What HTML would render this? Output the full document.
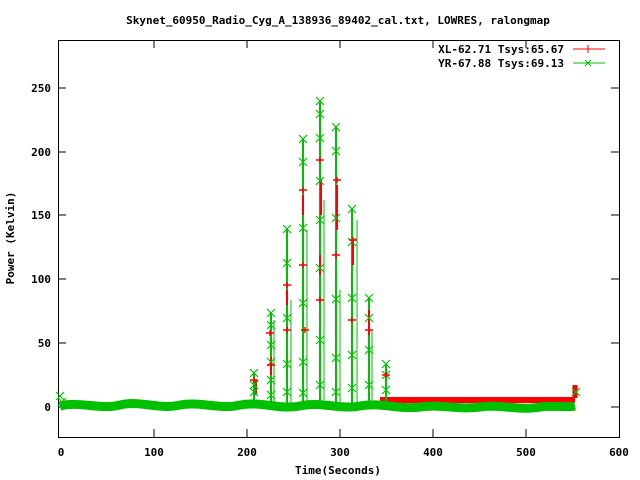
<!DOCTYPE html>
<html><head><meta charset="utf-8"><style>
html,body{margin:0;padding:0;background:#fff;width:640px;height:480px;overflow:hidden}
text{font-family:"DejaVu Sans Mono","Liberation Mono",monospace;font-weight:bold;font-size:11px;fill:#000}
</style></head><body>
<svg width="640" height="480" viewBox="0 0 640 480" xmlns="http://www.w3.org/2000/svg">
<defs>
<g id="gx"><path d="M-4,-4L4,4M-4,4L4,-4" stroke="#00c000" stroke-width="1.2"/></g>
<g id="rp"><path d="M-4,0H4M0,-3V3" stroke="#f00" stroke-width="1.5"/></g>
</defs>
<rect width="640" height="480" fill="#fff"/>
<rect x="58.5" y="40.5" width="561" height="397" fill="none" stroke="#000"/>
<g stroke="#000">
<path d="M58,407h8M58,343h8M58,279h8M58,215h8M58,152h8M58,88h8M619,407h-8M619,343h-8M619,279h-8M619,215h-8M619,152h-8M619,88h-8"/>
<path d="M154,437v-8M247,437v-8M340,437v-8M433,437v-8M526,437v-8M154,40v8M247,40v8M340,40v8M433,40v8M526,40v8"/>
</g>
<text x="338" y="24" text-anchor="middle">Skynet_60950_Radio_Cyg_A_138936_89402_cal.txt, LOWRES, ralongmap</text>
<g text-anchor="end">
<text x="51" y="411">0</text><text x="51" y="347">50</text><text x="51" y="283">100</text>
<text x="51" y="219">150</text><text x="51" y="156">200</text><text x="51" y="92">250</text>
</g>
<g text-anchor="middle">
<text x="61" y="456">0</text><text x="154" y="456">100</text><text x="247" y="456">200</text>
<text x="340" y="456">300</text><text x="433" y="456">400</text><text x="526" y="456">500</text><text x="619" y="456">600</text>
<text x="338" y="474">Time(Seconds)</text>
</g>
<text transform="translate(14,238) rotate(-90)" text-anchor="middle">Power (Kelvin)</text>
<g text-anchor="end"><text x="564" y="53">XL-62.71 Tsys:65.67</text><text x="564" y="67">YR-67.88 Tsys:69.13</text></g>
<path d="M573,49H605M588,45V53" stroke="#f00" stroke-width="1"/>
<path d="M573,63H605M585,60l6,6M585,66l6,-6" stroke="#00c000" stroke-width="1"/>
<!-- baseline bands -->
<path d="M380,400H575" stroke="#f00" stroke-width="6"/>
<path d="M210,405H380" stroke="#f00" stroke-width="4"/>
<path d="M60,406 C80,401 100,410 120,405 C140,400 160,410 180,405 C200,401 220,410 240,405 C260,401 280,410 300,406 C320,401 340,410 360,406 C380,402 400,410 420,407 C440,404 460,410 480,407 C500,404 520,411 540,407 C555,405 565,408 575,406" fill="none" stroke="#00c000" stroke-width="9"/>
<path d="M575,385V398" stroke="#f00" stroke-width="5"/>
<use href="#gx" x="576" y="392"/><use href="#gx" x="60" y="396"/><use href="#gx" x="62" y="402"/>
<g stroke="#00c000" stroke-width="2" fill="none">
<path d="M254,407V373M271,407V312M287,407V228M303,407V138M320,407V100M336,407V127M352,407V208M369,407V297M386,407V363"/>
<path d="M274,407V320M291,407V300M307,407V230M324,407V200M340,407V290M357,407V220M372,407V330" stroke-width="1"/>
</g>
<g stroke="#f00" stroke-width="2">
<path d="M271,375V357M287,290V305M303,195V215M321,180V215M320,255V275M337,185V230M353,240V265M369,310V335M256,395V380"/>
</g>
<g>
<use href="#gx" x="254" y="373"/><use href="#gx" x="254" y="385"/><use href="#gx" x="254" y="392"/>
<use href="#gx" x="271" y="313"/><use href="#gx" x="271" y="325"/><use href="#gx" x="271" y="345"/><use href="#gx" x="271" y="362"/><use href="#gx" x="271" y="380"/><use href="#gx" x="271" y="395"/>
<use href="#gx" x="287" y="229"/><use href="#gx" x="287" y="263"/><use href="#gx" x="287" y="318"/><use href="#gx" x="287" y="364"/><use href="#gx" x="287" y="392"/>
<use href="#gx" x="303" y="139"/><use href="#gx" x="303" y="162"/><use href="#gx" x="303" y="228"/><use href="#gx" x="303" y="303"/><use href="#gx" x="303" y="362"/><use href="#gx" x="303" y="393"/>
<use href="#gx" x="320" y="101"/><use href="#gx" x="320" y="114"/><use href="#gx" x="320" y="138"/><use href="#gx" x="320" y="181"/><use href="#gx" x="320" y="220"/><use href="#gx" x="320" y="268"/><use href="#gx" x="320" y="340"/><use href="#gx" x="320" y="385"/>
<use href="#gx" x="336" y="127"/><use href="#gx" x="336" y="151"/><use href="#gx" x="336" y="218"/><use href="#gx" x="336" y="299"/><use href="#gx" x="336" y="358"/><use href="#gx" x="336" y="392"/>
<use href="#gx" x="352" y="209"/><use href="#gx" x="352" y="242"/><use href="#gx" x="352" y="298"/><use href="#gx" x="352" y="355"/><use href="#gx" x="352" y="388"/>
<use href="#gx" x="369" y="298"/><use href="#gx" x="369" y="318"/><use href="#gx" x="369" y="350"/><use href="#gx" x="369" y="385"/>
<use href="#gx" x="386" y="364"/><use href="#gx" x="386" y="375"/><use href="#gx" x="386" y="390"/>
</g>
<g>
<use href="#rp" x="254" y="380"/><use href="#rp" x="270" y="333"/><use href="#rp" x="271" y="365"/><use href="#rp" x="287" y="285"/><use href="#rp" x="287" y="330"/>
<use href="#rp" x="303" y="190"/><use href="#rp" x="303" y="265"/><use href="#rp" x="305" y="330"/><use href="#rp" x="320" y="160"/><use href="#rp" x="320" y="300"/>
<use href="#rp" x="337" y="180"/><use href="#rp" x="336" y="255"/><use href="#rp" x="353" y="240"/><use href="#rp" x="352" y="320"/><use href="#rp" x="369" y="330"/><use href="#rp" x="386" y="375"/>
</g>
</svg>
</body></html>
